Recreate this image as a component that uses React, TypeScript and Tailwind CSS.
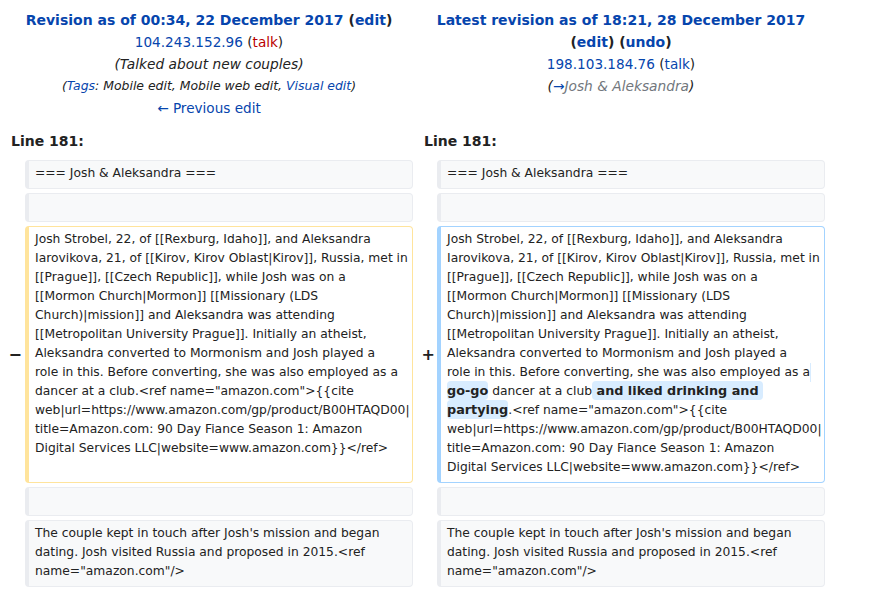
import React from 'react'

const link = 'text-[#0645ad]'

const boxBase =
  'whitespace-pre rounded-[4px] border border-l-4 px-[6px] pt-[3px] pb-[5px] text-[12.3px] leading-[19px] text-[#222]'
const context = `${boxBase} border-[#eaecf0] bg-[#f8f9fa]`
const deleted = `${boxBase} border-[#ffe49c] bg-white`
const added = `${boxBase} border-[#a3d3ff] bg-white`
const hl = 'rounded-[4px] bg-[#d8ecff] py-[2px] text-[12.8px] leading-[14px] font-bold'

const sharedLines = [
  'Josh Strobel, 22, of [[Rexburg, Idaho]], and Aleksandra',
  'Iarovikova, 21, of [[Kirov, Kirov Oblast|Kirov]], Russia, met in',
  '[[Prague]], [[Czech Republic]], while Josh was on a',
  '[[Mormon Church|Mormon]] [[Missionary (LDS',
  'Church)|mission]] and Aleksandra was attending',
  '[[Metropolitan University Prague]]. Initially an atheist,',
  'Aleksandra converted to Mormonism and Josh played a',
  'role in this. Before converting, she was also employed as a',
]

const citeLines = [
  'web|url=https://www.amazon.com/gp/product/B00HTAQD00|',
  'title=Amazon.com: 90 Day Fiance Season 1: Amazon',
  'Digital Services LLC|website=www.amazon.com}}</ref>',
]

const Marker: React.FC<{ sign?: string; nudge?: string }> = ({ sign, nudge = '' }) => (
  <div className={`flex items-center justify-end text-[16px] font-bold text-[#222] ${nudge}`}>{sign}</div>
)

const ContextRow: React.FC<{ text: string }> = ({ text }) => (
  <>
    <Marker />
    <div className={context}>{text}</div>
    <Marker />
    <div className={context}>{text}</div>
  </>
)

const App: React.FC = () => (
  <div className="min-h-screen bg-white font-['DejaVu_Sans',sans-serif] text-[13.6px] text-[#222]">
    <div className="grid w-[829px] grid-cols-[16px_388px_16px_388px] gap-x-1 gap-y-1 pl-[5px] pt-[9px]">
      <div className="col-span-2 text-center leading-[22px]">
        <div className="text-[14px] font-bold">
          <span className={link}>Revision as of 00:34, 22 December 2017</span> (<span className={link}>edit</span>)
        </div>
        <div>
          <span className={link}>104.243.152.96</span> (<span className="text-[#ba0000]">talk</span>)
        </div>
        <div className="text-[13.75px] italic">(Talked about new couples)</div>
        <div className="text-[12.45px] italic">
          (<span className={link}>Tags</span>: Mobile edit, Mobile web edit, <span className={link}>Visual edit</span>)
        </div>
        <div>
          <span className={link}>← Previous edit</span>
        </div>
      </div>
      <div className="col-span-2 text-center leading-[22px]">
        <div className="text-[14px] font-bold">
          <span className={link}>Latest revision as of 18:21, 28 December 2017</span>
        </div>
        <div className="text-[14px] font-bold">
          (<span className={link}>edit</span>) (<span className={link}>undo</span>)
        </div>
        <div>
          <span className={link}>198.103.184.76</span> (<span className={link}>talk</span>)
        </div>
        <div className="text-[13.75px] italic">
          (<span className={link}>→</span>
          <span className="text-[#72777d]">Josh &amp; Aleksandra</span>)
        </div>
      </div>

      <div className="col-span-2 mt-[7px] mb-[4px] pl-[6px] text-[14px] font-bold leading-[22px]">Line 181:</div>
      <div className="col-span-2 mt-[7px] mb-[4px] pl-[7px] text-[14px] font-bold leading-[22px]">Line 181:</div>

      <ContextRow text="=== Josh & Aleksandra ===" />
      <ContextRow text=" " />

      <Marker sign="−" nudge="translate-x-[1px]" />
      <div className={deleted}>
        {[...sharedLines, 'dancer at a club.<ref name="amazon.com">{{cite', ...citeLines].join('\n')}
      </div>
      <Marker sign="+" nudge="translate-x-[2px]" />
      <div className={added}>
        {sharedLines.join('\n')}
        <span className="inline-block h-[19px] w-[1.5px] bg-[#d8ecff] align-top" />
        {'\n'}
        <span className={hl}>go-go</span>
        {' dancer at a club'}
        <span className={hl}> and liked drinking and </span>
        {'\n'}
        <span className={hl}>partying</span>
        {'.<ref name="amazon.com">{{cite\n'}
        {citeLines.join('\n')}
      </div>

      <ContextRow text=" " />
      <ContextRow
        text={"The couple kept in touch after Josh's mission and began\ndating. Josh visited Russia and proposed in 2015.<ref\nname=\"amazon.com\"/>"}
      />
    </div>
  </div>
)

export default App
